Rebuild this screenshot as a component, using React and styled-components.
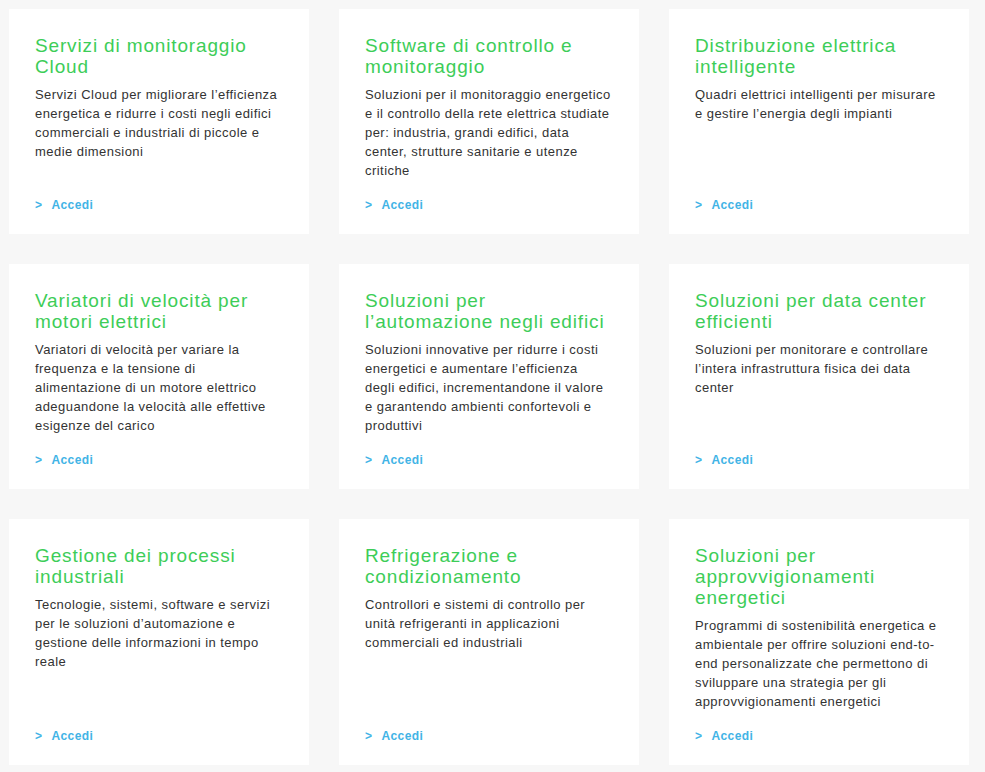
import styled, { createGlobalStyle } from 'styled-components'

const GlobalStyle = createGlobalStyle`
  html, body {
    margin: 0;
    padding: 0;
    background: #f7f7f7;
  }
  body {
    font-family: 'Liberation Sans', Arial, sans-serif;
  }
`

const Page = styled.div`
  padding: 9px;
  background: #f7f7f7;
  min-height: 772px;
  box-sizing: border-box;
`

const Grid = styled.div`
  display: grid;
  grid-template-columns: repeat(3, 300px);
  column-gap: 30px;
  row-gap: 30px;
`

const Card = styled.div`
  background: #fff;
  display: flex;
  flex-direction: column;
  padding: 26px 27.8px 21px 26px;
`

const Title = styled.h3`
  margin: 0;
  font-weight: 400;
  font-size: 19px;
  line-height: 21px;
  letter-spacing: 0.85px;
  color: #3dcd58;
`

const Text = styled.p`
  margin: 8px 0 0;
  font-size: 13px;
  line-height: 19px;
  letter-spacing: 0.45px;
  color: #333;
`

const Link = styled.a`
  margin-top: auto;
  padding-top: 17px;
  font-size: 12px;
  line-height: 16px;
  font-weight: 700;
  letter-spacing: 0.4px;
  color: #42b4e6;
  text-decoration: none;
  span {
    margin-right: 9px;
  }
`

const items = [
  {
    title: 'Servizi di monitoraggio Cloud',
    text: 'Servizi Cloud per migliorare l’efficienza energetica e ridurre i costi negli edifici commerciali e industriali di piccole e medie dimensioni',
  },
  {
    title: 'Software di controllo e monitoraggio',
    text: 'Soluzioni per il monitoraggio energetico e il controllo della rete elettrica studiate per: industria, grandi edifici, data center, strutture sanitarie e utenze critiche',
  },
  {
    title: 'Distribuzione elettrica intelligente',
    text: 'Quadri elettrici intelligenti per misurare e gestire l’energia degli impianti',
  },
  {
    title: 'Variatori di velocità per motori elettrici',
    text: 'Variatori di velocità per variare la frequenza e la tensione di alimentazione di un motore elettrico adeguandone la velocità alle effettive esigenze del carico',
  },
  {
    title: 'Soluzioni per l’automazione negli edifici',
    text: 'Soluzioni innovative per ridurre i costi energetici e aumentare l’efficienza degli edifici, incrementandone il valore e garantendo ambienti confortevoli e produttivi',
  },
  {
    title: 'Soluzioni per data center efficienti',
    text: 'Soluzioni per monitorare e controllare l’intera infrastruttura fisica dei data center',
  },
  {
    title: 'Gestione dei processi industriali',
    text: 'Tecnologie, sistemi, software e servizi per le soluzioni d’automazione e gestione delle informazioni in tempo reale',
  },
  {
    title: 'Refrigerazione e condizionamento',
    text: 'Controllori e sistemi di controllo per unità refrigeranti in applicazioni commerciali ed industriali',
  },
  {
    title: 'Soluzioni per approvvigionamenti energetici',
    text: 'Programmi di sostenibilità energetica e ambientale per offrire soluzioni end-to-end personalizzate che permettono di sviluppare una strategia per gli approvvigionamenti energetici',
  },
]

const App = () => {
  return (
    <>
      <GlobalStyle />
      <Page>
        <Grid>
          {items.map((item) => (
            <Card key={item.title}>
              <Title>{item.title}</Title>
              <Text>{item.text}</Text>
              <Link href="#">
                <span>&gt;</span>Accedi
              </Link>
            </Card>
          ))}
        </Grid>
      </Page>
    </>
  )
}

export default App
